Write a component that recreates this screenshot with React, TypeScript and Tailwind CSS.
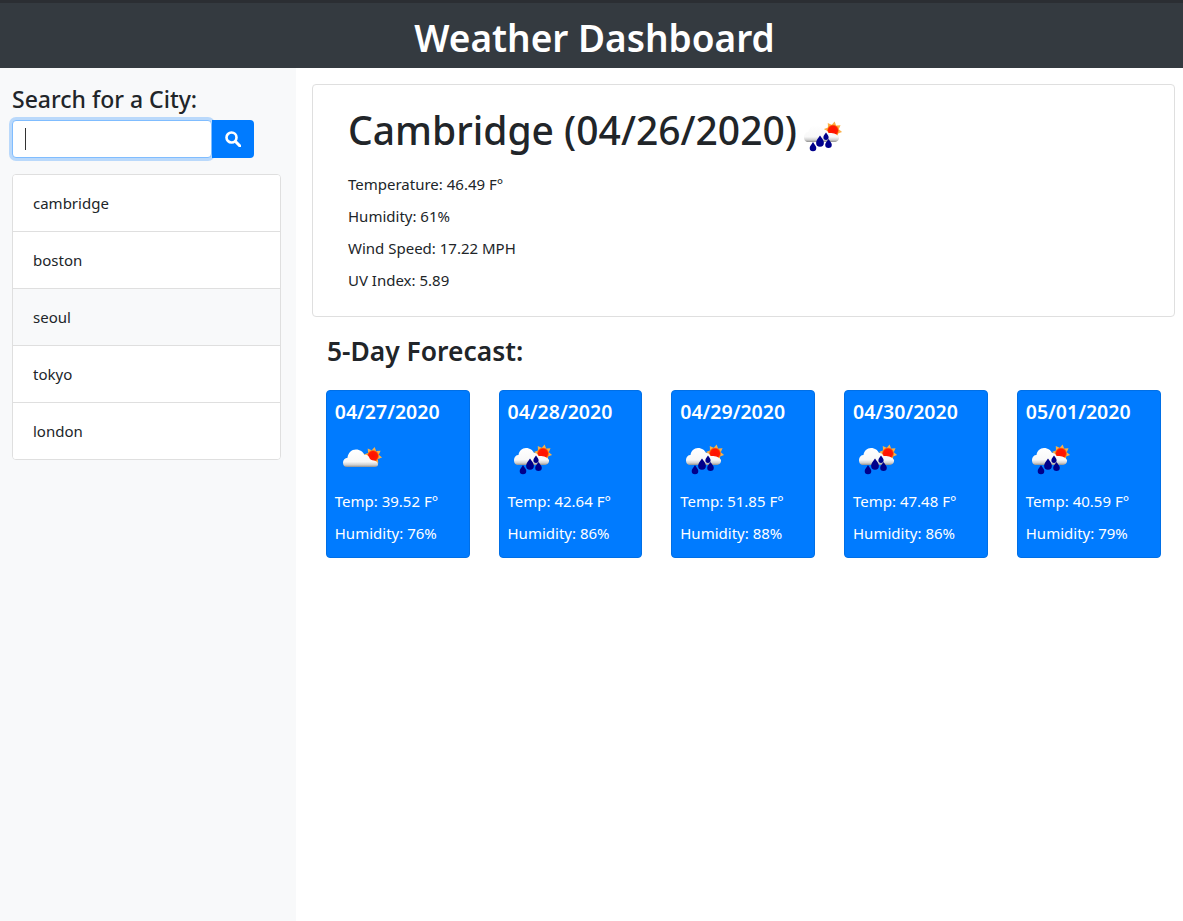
import React from "react";

function Sun({ uid, cx, cy }: { uid: string; cx: number; cy: number }) {
  const angles = [0, 45, 90, 135, 180, 225, 270, 315];
  return (
    <g>
      {angles.map((a) => (
        <path
          key={a}
          d={`M${cx - 2.2} ${cy - 5.5} L${cx} ${cy - 9.2} L${cx + 2.2} ${cy - 5.5} Z`}
          fill="#f9b04a"
          transform={`rotate(${a + 10} ${cx} ${cy})`}
        />
      ))}
      <circle cx={cx} cy={cy} r="6" fill={`url(#s${uid})`} />
    </g>
  );
}

function Cloud({ uid, rain }: { uid: string; rain: boolean }) {
  return (
    <svg width="50" height="50" viewBox="0 0 50 50" className="block" aria-hidden="true">
      <defs>
        <linearGradient id={`c${uid}`} x1="0" y1="0" x2="0" y2="1">
          <stop offset="0" stopColor="#ffffff" />
          <stop offset="0.7" stopColor="#f8f8f8" />
          <stop offset="0.88" stopColor="#cfcfcf" />
          <stop offset="1" stopColor="#8f8f8f" />
        </linearGradient>
        <radialGradient id={`s${uid}`} cx="0.5" cy="0.5" r="0.5">
          <stop offset="0" stopColor="#ff1000" />
          <stop offset="0.75" stopColor="#ff1a00" />
          <stop offset="1" stopColor="#ff9a1a" />
        </radialGradient>
      </defs>
      {rain ? <Sun uid={uid} cx={35} cy={18.5} /> : <Sun uid={uid} cx={38} cy={21} />}
      <path
        d={
          rain
            ? "M10 30 C7 30 6 27.5 6 25 C6 22 8 20 10.5 20 C11 16 14 13 18 13 C22 13 25 15.5 26 18 C28 17.5 30 19 30.5 21 C34 20.5 40 22 41 25 C41.5 28 39 30 36 30 Z"
            : "M12 32 C9 32 8 30 8 27.5 C8 25 10 23 12.5 22.8 C13 18 16.5 14.5 21 14.5 C25 14.5 28 16.8 29.5 20 C31 19.5 33 20 34 22 C34.5 24.5 37 25.5 39 25.5 C42 26 43 28 43 29.5 C43 31 42 32 40 32 Z"
        }
        fill={`url(#c${uid})`}
      />
      {rain && (
        <g fill="#00008b">
          <path d="M15 30 C16.8 33 18.3 34 18.3 36 A3.3 3.3 0 0 1 11.7 36 C11.7 34 13.2 33 15 30 Z" />
          <path d="M22 23.5 C24.3 27 25.9 28.5 25.9 30.8 A3.9 3.9 0 0 1 18.1 30.8 C18.1 28.5 19.7 27 22 23.5 Z" />
          <path d="M28 20.5 C29.2 22.4 30.6 23.5 30.6 25.3 A2.6 2.6 0 0 1 25.4 25.3 C25.4 23.5 26.8 22.4 28 20.5 Z" />
          <path d="M30.5 27 C32.3 29.8 33.8 30.8 33.8 32.8 A3.3 3.3 0 0 1 27.2 32.8 C27.2 30.8 28.7 29.8 30.5 27 Z" />
        </g>
      )}
    </svg>
  );
}

const cities = ["cambridge", "boston", "seoul", "tokyo", "london"];
const days = [
  { d: "04/27/2020", t: "39.52", h: "76", rain: false },
  { d: "04/28/2020", t: "42.64", h: "86", rain: true },
  { d: "04/29/2020", t: "51.85", h: "88", rain: true },
  { d: "04/30/2020", t: "47.48", h: "86", rain: true },
  { d: "05/01/2020", t: "40.59", h: "79", rain: true },
];

export default function App() {
  return (
    <div className="flex min-h-[921px] flex-col bg-white font-['Noto_Sans',sans-serif] text-[15px] leading-6 text-[#212529]">
      <header className="flex h-[68px] items-center justify-center border-t-[3px] border-[#2b2e33] bg-[#343a40] pl-[6px] pt-[6px]">
        <h1 className="text-[37px] font-semibold leading-[1.2] text-white">Weather Dashboard</h1>
      </header>
      <div className="flex flex-1">
        <aside className="w-[296px] shrink-0 bg-[#f8f9fa] pl-3 pr-[15px] pt-[17px]">
          <h4 className="h-[35px] text-[23px] font-medium leading-[28px]">Search for a City:</h4>
          <div className="flex h-[38px] w-[242px]">
            <div className="z-10 flex w-[200px] items-center rounded-[4px] border border-[#80bdff] bg-white pl-3 shadow-[0_0_0_3px_rgba(0,123,255,0.25)]">
              <div className="h-[22px] w-px bg-[#333]" />
            </div>
            <button className="flex w-[42px] items-center justify-center rounded-r-[4px] bg-[#007bff]">
              <svg width="16" height="16" viewBox="0 0 16 16" fill="none" stroke="white" aria-hidden="true">
                <circle cx="6.5" cy="6.5" r="5" strokeWidth="2.6" />
                <path d="M10.5 10.5 L15 15" strokeWidth="3" strokeLinecap="round" />
              </svg>
            </button>
          </div>
          <ul className="mt-4 overflow-hidden rounded-[4px] border border-[#dfdfdf] bg-white">
            {cities.map((c, i) => (
              <li
                key={c}
                className={`flex items-center px-5 ${i > 0 ? "h-[57px] border-t border-[#dfdfdf]" : "h-[56px]"} ${c === "seoul" ? "bg-[#f8f9fa]" : "bg-white"}`}
              >
                {c}
              </li>
            ))}
          </ul>
        </aside>
        <main className="flex-1 pl-4 pr-2 pt-4">
          <section className="h-[233px] rounded-[4px] border border-[#dfdfdf] px-[35px] pt-[17px]">
            <div className="flex h-[57px] items-center">
              <h2 className="text-[39px] font-medium leading-[1.2]">Cambridge (04/26/2020)</h2>
              <div className="ml-[1px] mt-[10px] h-[50px] w-[50px] self-start">
                <Cloud uid="main" rain />
              </div>
            </div>
            <div className="mt-[13px] flex flex-col gap-2">
              <p>Temperature: 46.49 F°</p>
              <p>Humidity: 61%</p>
              <p>Wind Speed: 17.22 MPH</p>
              <p>UV Index: 5.89</p>
            </div>
          </section>
          <h3 className="ml-[15px] mt-[16px] text-[26.4px] font-semibold leading-[36px]">5-Day Forecast:</h3>
          <div className="ml-[13.75px] mr-[14.5px] mt-[21px] flex justify-between">
            {days.map((x) => (
              <div key={x.d} className="h-[168px] w-[143.75px] rounded-[4px] border border-[#006fe6] bg-[#007bff] pl-2 pt-[9px] text-white">
                <h5 className="text-[19.5px] font-semibold leading-6">{x.d}</h5>
                <div className="mt-[11px] h-[50px]">
                  <Cloud uid={x.d} rain={x.rain} />
                </div>
                <p className="mt-[4px]">Temp: {x.t} F°</p>
                <p className="mt-2">Humidity: {x.h}%</p>
              </div>
            ))}
          </div>
        </main>
      </div>
    </div>
  );
}
